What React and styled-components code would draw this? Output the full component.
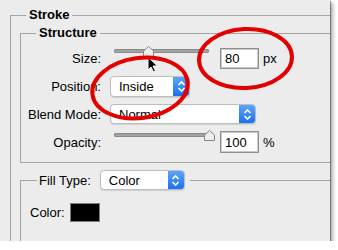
import React from 'react';
import styled, {createGlobalStyle} from 'styled-components';

const Global = createGlobalStyle`
    body{
        margin: 0;
        background: #ffffff;
        font-family: "Liberation Sans", Arial, sans-serif;
        font-size: 13px;
        color: #000;
    }
`;

const Panel = styled.div`
    position: relative;
    width: 330px;
    height: 241px;
    overflow: hidden;
    background: #ececec;
    box-shadow: 1px 1px 1px rgba(0,0,0,0.35), 3px 3px 4px rgba(0,0,0,0.3);
`;

const Group = styled.fieldset`
    margin: ${p => p.$top}px 0 0 ${p => p.$left}px;
    padding: ${p => p.$pad || '0'};
    border: 1px solid #a4a4a4;
    width: ${p => p.$width}px;
    min-height: ${p => p.$minHeight || 0}px;
    box-sizing: border-box;
    min-inline-size: 0;
`;

const Title = styled.legend`
    margin-left: 15px;
    padding: 0 3px;
    font-weight: bold;
    line-height: 16px;
`;

const FillLegend = styled.legend`
    margin-left: 16px;
    padding: 0 5px 0 2px;
    display: flex;
    align-items: center;
    height: 20px;
    gap: 9px;
`;

const Row = styled.div`
    display: flex;
    align-items: center;
    height: 28px;
`;

const Label = styled.span`
    width: 80px;
    flex-shrink: 0;
    text-align: right;
    line-height: 16px;
    padding-top: 2px;
`;

const Slider = styled.div`
    position: relative;
    align-self: flex-start;
    margin: 5px 0 0 13px;
    width: 95px;
    height: 4px;
    border-radius: 2px;
    background: linear-gradient(#8f8f8f, #b9b9b9);
    box-shadow: inset 0 0 0 1px #8a8a8a;
`;

const Thumb = styled.svg`
    position: absolute;
    top: -3px;
    width: 11px;
    height: 11px;
`;

const Field = styled.div`
    margin-left: ${p => p.$gap}px;
    width: 39px;
    height: ${p => p.$h}px;
    box-sizing: border-box;
    background: #fff;
    border: 1px solid #8f8f8f;
    box-shadow: inset 0 0 0 1px #c9c9c9;
    padding: 0 4px;
    display: flex;
    align-items: center;
`;

const Unit = styled.span`
    margin-left: 4px;
`;

const Select = styled.div`
    margin-left: ${p => p.$gap || 0}px;
    width: ${p => p.$width}px;
    height: ${p => p.$h || 21}px;
    box-sizing: border-box;
    display: flex;
    background: #fff;
    border: 1px solid #bdbdbd;
    border-radius: 4px;
    box-shadow: 0 1px 1px rgba(0,0,0,0.12);
    overflow: hidden;
`;

const SelectText = styled.span`
    flex: 1;
    padding-left: 8px;
    display: flex;
    align-items: center;
`;

const SelectArrow = styled.span`
    width: 16px;
    display: flex;
    align-items: center;
    justify-content: center;
    background: linear-gradient(#5aa6fb, #1c71ef);
`;

const ColorRow = styled.div`
    display: flex;
    align-items: center;
    margin: 13px 0 0 9px;
    gap: 5px;
`;

const Swatch = styled.div`
    width: 30px;
    height: 19px;
    box-sizing: border-box;
    background: #000;
    border: 1px solid #7d7d7d;
`;

const Marks = styled.svg`
    position: absolute;
    left: 0;
    top: 0;
    pointer-events: none;
`;

const Chevrons = () => (
    <svg width="9" height="13" viewBox="0 0 9 13">
        <path d="M1.5 5 L4.5 2 L7.5 5 M1.5 8 L4.5 11 L7.5 8" fill="none" stroke="#fff" strokeWidth="1.6" />
    </svg>
);

const Dropdown = ({value, width, gap, h}) => (
    <Select $width={width} $gap={gap} $h={h}>
        <SelectText>{value}</SelectText>
        <SelectArrow><Chevrons /></SelectArrow>
    </Select>
);

const Range = ({pct}) => (
    <Slider>
        <Thumb viewBox="0 0 11 11" style={{left: `calc(${pct}% - 5.5px)`}}>
            <polygon points="5.5,0.5 10.5,5 10.5,10.5 0.5,10.5 0.5,5" fill="#ededed" stroke="#888" />
        </Thumb>
    </Slider>
);

const App = () => {
    return (
        <Panel>
            <Global />
            <Group $top={7} $left={10} $width={345} $minHeight={260}>
                <Title>Stroke</Title>
                <Group $top={2} $left={9} $width={330} $pad="3px 0 6px 0">
                    <Title>Structure</Title>
                    <Row>
                        <Label>Size:</Label>
                        <Range pct={36} />
                        <Field $gap={11} $h={21}>80</Field>
                        <Unit>px</Unit>
                    </Row>
                    <Row>
                        <Label>Position:</Label>
                        <Dropdown value="Inside" width={80} gap={9} />
                    </Row>
                    <Row>
                        <Label>Blend Mode:</Label>
                        <Dropdown value="Normal" width={146} gap={9} h={20} />
                    </Row>
                    <Row>
                        <Label>Opacity:</Label>
                        <Range pct={100} />
                        <Field $gap={11} $h={22}>100</Field>
                        <Unit>%</Unit>
                    </Row>
                </Group>
                <Group $top={7} $left={9} $width={330} $minHeight={100}>
                    <FillLegend>
                        <span>Fill Type:</span>
                        <Dropdown value="Color" width={85} h={20} />
                    </FillLegend>
                    <ColorRow>
                        <span>Color:</span>
                        <Swatch />
                    </ColorRow>
                </Group>
            </Group>
            <Marks width="330" height="241" viewBox="0 0 330 241">
                <path d="M148 57 L148 70 L151 67 L153.5 72 L155.5 71 L153 66 L157.5 66 Z" fill="#000" stroke="#fff" strokeWidth="1" />
                <ellipse cx="140" cy="88" rx="48" ry="30" transform="rotate(-8 140 88)" fill="none" stroke="#e30000" strokeWidth="4" />
                <ellipse cx="245.5" cy="58.5" rx="46.5" ry="29.5" transform="rotate(-3 245.5 58.5)" fill="none" stroke="#e30000" strokeWidth="4" />
            </Marks>
        </Panel>
    );
};

export default App;
